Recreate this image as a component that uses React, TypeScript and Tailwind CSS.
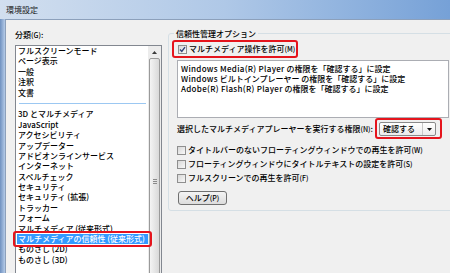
const items = [
  "フルスクリーンモード",
  "ページ表示",
  "一般",
  "注釈",
  "文書",
];

const items2 = [
  "3D とマルチメディア",
  "JavaScript",
  "アクセシビリティ",
  "アップデーター",
  "アドビオンラインサービス",
  "インターネット",
  "スペルチェック",
  "セキュリティ",
  "セキュリティ (拡張)",
  "トラッカー",
  "フォーム",
  "マルチメディア (従来形式)",
  "マルチメディアの信頼性 (従来形式)",
  "ものさし (2D)",
  "ものさし (3D)",
];

const SELECTED = "マルチメディアの信頼性 (従来形式)";

function Key({ k }: { k: string }) {
  return <span className="text-[7px]">({k})</span>;
}

function CheckBox({ checked }: { checked?: boolean }) {
  return (
    <span className="relative flex items-center justify-center w-[9px] h-[9px] shrink-0 border border-[#8f8f8f] bg-gradient-to-br from-[#d8d8d8] to-[#f8f8f8]">
      {checked && (
        <svg width="7" height="7" viewBox="0 0 7 7">
          <path d="M1 3.6 L2.8 5.4 L6 1.2" fill="none" stroke="#31437a" strokeWidth="1.4" />
        </svg>
      )}
    </span>
  );
}

function RedBox({ className }: { className: string }) {
  return <span className={"absolute border-2 border-[#e5141c] rounded-[3px] pointer-events-none " + className} />;
}

export default function App() {
  return (
    <div className="w-[450px] h-[273px] overflow-hidden flex flex-col bg-[#f0f0f0] text-black text-[8px] font-medium font-['Noto_Sans_CJK_JP','Noto_Sans',sans-serif]">
      {/* title bar */}
      <div className="h-[19px] shrink-0 flex items-center pl-[6px] font-normal text-[#1b1b1b] bg-gradient-to-r from-[#d2dfef] via-[#afc8e7] to-[#76a1d7]">
        環境設定
      </div>

      <div className="flex flex-1 min-h-0">
        {/* window frame */}
        <div className="w-[5px] shrink-0 bg-gradient-to-r from-[#6f91c0] to-[#b5cbe8]" />

        <div className="flex flex-1 min-w-0 border-t border-l border-[#8ca0bb]">
          {/* left: categories */}
          <div className="ml-[9px] w-[147px] shrink-0 flex flex-col">
            <div className="mt-[9px] h-[11px] leading-[11px]">
              分類<Key k="G" />:
            </div>
            <div className="mt-[5px] -mb-[10px] flex-1 flex border border-[#828790] bg-white">
              <div className="flex-1 min-w-0 leading-[10.4px] pl-[1px]">
                {items.map((t) => (
                  <div key={t} className="h-[10.4px] pl-[1px] whitespace-nowrap">{t}</div>
                ))}
                <div className="h-[11.4px] flex items-center px-[2px]">
                  <div className="h-px w-full bg-[#9cc8f2]" />
                </div>
                {items2.map((t) =>
                  t === SELECTED ? (
                    <div key={t} className="relative h-[10.4px] pl-[1px] whitespace-nowrap bg-[#3399ff] text-white">
                      {t}
                      <RedBox className="-left-[4px] -right-[4px] -top-[3px] -bottom-[3px]" />
                    </div>
                  ) : (
                    <div key={t} className="h-[10.4px] pl-[1px] whitespace-nowrap">{t}</div>
                  )
                )}
              </div>
              {/* scrollbar */}
              <div className="w-[13px] shrink-0 flex flex-col bg-[#ececec]">
                <div className="h-[12px] flex items-center justify-center">
                  <svg width="5" height="3" viewBox="0 0 5 3">
                    <path d="M0 3 L2.5 0 L5 3 Z" fill="#3a3a3a" />
                  </svg>
                </div>
                <div className="flex-1 mx-[1px] border border-[#9a9a9a] rounded-[2px] bg-gradient-to-r from-[#f4f4f4] to-[#d9d9d9] flex flex-col items-center pt-[120px] gap-[1px]">
                  <div className="h-px w-[4px] bg-[#8a8a8a]" />
                  <div className="h-px w-[4px] bg-[#8a8a8a]" />
                  <div className="h-px w-[4px] bg-[#8a8a8a]" />
                </div>
              </div>
            </div>
          </div>

          {/* right: group box */}
          <div className="ml-[6px] -mr-[10px] flex-1 min-w-0">
            <div className="relative mt-[13px] h-[178px] border border-[#d5dfe5] rounded-[3px] pl-[8px] pr-[10px]">
              <div className="absolute left-[5px] -top-[7px] px-[2px] leading-[13px] bg-[#f0f0f0]">
                信頼性管理オプション
              </div>

              <div className="relative mt-[8px] ml-[1px] w-fit h-[14px] flex items-center gap-[2px]">
                <CheckBox checked />
                <span className="whitespace-nowrap">
                  マルチメディア操作を許可<Key k="M" />
                </span>
                <RedBox className="-left-[6px] -right-[3px] -top-[2px] -bottom-[2px]" />
              </div>

              <div className="mt-[4px] h-[58px] border border-[#abadb3] bg-white pl-[3px] pt-[3px] leading-[10px] whitespace-nowrap">
                <div><span className="tracking-[0.3px]">Windows Media(R) Player</span> の権限を「確認する」に設定</div>
                <div><span className="tracking-[0.3px]">Windows</span> ビルトインプレーヤー の権限を「確認する」に設定</div>
                <div><span className="tracking-[0.3px]">Adobe(R) Flash(R) Player</span> の権限を「確認する」に設定</div>
              </div>

              <div className="mt-[4px] h-[14px] flex items-center">
                <div className="w-[202px] shrink-0 whitespace-nowrap">
                  選択したマルチメディアプレーヤーを実行する権限<Key k="N" />:
                </div>
                <div className="relative w-[57px] h-[14px] shrink-0 flex border border-[#8a8a8a] rounded-[2px] bg-gradient-to-b from-[#ffffff] to-[#ececec]">
                  <span className="flex-1 pl-[3px] leading-[12px]">確認する</span>
                  <span className="w-[13px] flex items-center justify-center border-l border-[#c8c8c8]">
                    <svg width="5" height="3" viewBox="0 0 5 3">
                      <path d="M0 0 L5 0 L2.5 3 Z" fill="#111" />
                    </svg>
                  </span>
                  <RedBox className="-left-[5px] -right-[7px] -top-[5px] -bottom-[4px]" />
                </div>
              </div>

              <div className="mt-[7px] flex flex-col">
                <div className="h-[14px] flex items-center gap-[2px] whitespace-nowrap">
                  <CheckBox />
                  <span>タイトルバーのないフローティングウィンドウでの再生を許可<Key k="W" /></span>
                </div>
                <div className="h-[14px] flex items-center gap-[2px] whitespace-nowrap">
                  <CheckBox />
                  <span>フローティングウィンドウにタイトルテキストの設定を許可<Key k="S" /></span>
                </div>
                <div className="h-[14px] flex items-center gap-[2px] whitespace-nowrap">
                  <CheckBox />
                  <span>フルスクリーンでの再生を許可<Key k="F" /></span>
                </div>
              </div>

              <button className="mt-[6px] ml-[1px] w-[49px] h-[14px] flex items-center justify-center border border-[#707070] rounded-[3px] bg-gradient-to-b from-[#f4f4f4] to-[#dcdcdc] leading-none">
                ヘルプ<Key k="P" />
              </button>
            </div>
          </div>
        </div>
      </div>
    </div>
  );
}
